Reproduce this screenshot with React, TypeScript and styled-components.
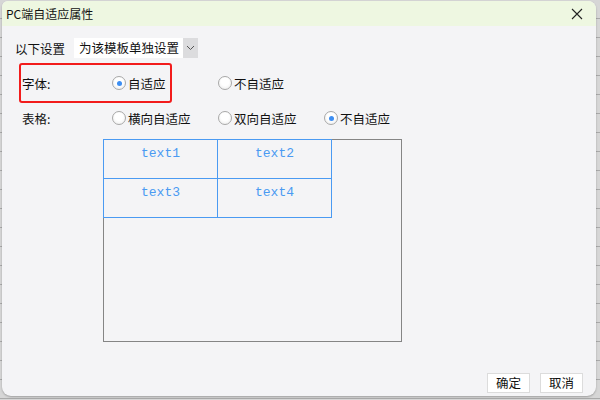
import React from "react";
import styled, { createGlobalStyle } from "styled-components";

const Global = createGlobalStyle`
  html, body { margin: 0; padding: 0; }
  body {
    width: 600px; height: 400px; overflow: hidden;
    font-family: "Noto Sans CJK SC", "Noto Sans", sans-serif;
  }
`;

const Backdrop = styled.div`
  width: 600px;
  height: 400px;
  box-sizing: border-box;
  padding: 1px 4px 4px 2px;
  background-color: #d6d6d6;
  background-image:
    repeating-linear-gradient(to bottom, transparent 0 18px, #a9a9a9 18px 19px);
  display: flex;
`;

const Dialog = styled.div`
  flex: 1;
  display: flex;
  flex-direction: column;
  background: #f4f4f6;
  border-radius: 6px 8px 9px 9px;
  overflow: hidden;
  box-shadow: 0 1px 2px rgba(0,0,0,0.25);
`;

const TitleBar = styled.div`
  height: 25px;
  background: #eef7e1;
  display: flex;
  align-items: center;
  justify-content: space-between;
  padding: 0 13px 0 4px;
  font-size: 12px;
  color: #111;
`;

const CloseIcon = styled.svg`
  width: 12px;
  height: 12px;
`;

const Body = styled.div`
  flex: 1;
  display: flex;
  flex-direction: column;
  padding: 12px 0 0 0;
  font-size: 12.5px;
  color: #111;
`;

const SettingRow = styled.div`
  display: flex;
  align-items: center;
  height: 20px;
  padding-left: 13px;
  gap: 9px;
`;

const Select = styled.div`
  display: flex;
  height: 20px;
`;

const SelectValue = styled.div`
  background: #fff;
  padding: 0 4px 0 5px;
  display: flex;
  align-items: center;
  line-height: 20px;
`;

const SelectArrow = styled.div`
  width: 15px;
  background: #dcdcde;
  display: flex;
  align-items: center;
  justify-content: center;
`;

const OptionsBlock = styled.div`
  display: flex;
  flex-direction: column;
  margin-top: 5px;
`;

const HighlightWrap = styled.div`
  position: relative;
`;

const Highlight = styled.div`
  position: absolute;
  left: 17px;
  top: 0;
  width: 149px;
  height: 36px;
  border: 2px solid #f21c1c;
  border-radius: 3px;
  pointer-events: none;
`;

const OptionRow = styled.div<{ $h: number }>`
  display: flex;
  align-items: center;
  height: ${(p) => p.$h}px;
  padding-left: 20px;
`;

const RowLabel = styled.div`
  width: 90px;
`;

const Option = styled.label`
  width: 106px;
  display: flex;
  align-items: center;
  gap: 2px;
`;

const Radio = styled.span<{ $checked?: boolean }>`
  width: 12px;
  height: 12px;
  border-radius: 50%;
  border: 1px solid #a8a8a8;
  background: radial-gradient(circle at 50% 40%, #ffffff 40%, #e9e9e9 100%);
  display: inline-flex;
  align-items: center;
  justify-content: center;
  box-sizing: content-box;
  &::after {
    content: "";
    display: ${(p) => (p.$checked ? "block" : "none")};
    width: 5px;
    height: 5px;
    border-radius: 50%;
    background: #3d8ef2;
  }
`;

const Preview = styled.div`
  margin: 6px 0 0 101px;
  width: 299px;
  height: 203px;
  border: 1px solid #858585;
  box-sizing: border-box;
`;

const Grid = styled.div`
  margin: -1px 0 0 -1px;
  display: grid;
  grid-template-columns: 114px 114px;
  grid-template-rows: 39px 39px;
  width: 229px;
  border-right: 1px solid #4a9af2;
  border-bottom: 1px solid #4a9af2;
  box-sizing: border-box;
`;

const Cell = styled.div`
  border-left: 1px solid #4a9af2;
  border-top: 1px solid #4a9af2;
  color: #4a9af2;
  font-family: "Liberation Mono", "DejaVu Sans Mono", monospace;
  font-size: 13px;
  text-align: center;
  padding-top: 6px;
  box-sizing: border-box;
`;

const Footer = styled.div`
  margin-top: auto;
  display: flex;
  justify-content: flex-end;
  gap: 10px;
  padding: 0 13px 3px 0;
`;

const Button = styled.button`
  width: 43px;
  height: 20px;
  background: #fff;
  border: 1px solid #dcdcdc;
  font-family: "Noto Sans CJK SC", sans-serif;
  font-size: 12.5px;
  color: #111;
  padding: 0;
  line-height: 18px;
`;

export default function App() {
  return (
    <>
      <Global />
      <Backdrop>
        <Dialog>
          <TitleBar>
            <span>PC端自适应属性</span>
            <CloseIcon viewBox="0 0 12 12">
              <path d="M1 1 L11 11 M11 1 L1 11" stroke="#222" strokeWidth="1.1" />
            </CloseIcon>
          </TitleBar>
          <Body>
            <SettingRow>
              <span>以下设置</span>
              <Select>
                <SelectValue>为该模板单独设置</SelectValue>
                <SelectArrow>
                  <svg width="9" height="6" viewBox="0 0 9 6">
                    <path d="M1 1 L4.5 4.5 L8 1" fill="none" stroke="#555" strokeWidth="1" />
                  </svg>
                </SelectArrow>
              </Select>
            </SettingRow>
            <OptionsBlock>
              <HighlightWrap>
                <OptionRow $h={40}>
                  <RowLabel>字体:</RowLabel>
                  <Option><Radio $checked />自适应</Option>
                  <Option><Radio />不自适应</Option>
                </OptionRow>
                <Highlight />
              </HighlightWrap>
              <OptionRow $h={30}>
                <RowLabel>表格:</RowLabel>
                <Option><Radio />横向自适应</Option>
                <Option><Radio />双向自适应</Option>
                <Option><Radio $checked />不自适应</Option>
              </OptionRow>
            </OptionsBlock>
            <Preview>
              <Grid>
                <Cell>text1</Cell>
                <Cell>text2</Cell>
                <Cell>text3</Cell>
                <Cell>text4</Cell>
              </Grid>
            </Preview>
            <Footer>
              <Button>确定</Button>
              <Button>取消</Button>
            </Footer>
          </Body>
        </Dialog>
      </Backdrop>
    </>
  );
}
